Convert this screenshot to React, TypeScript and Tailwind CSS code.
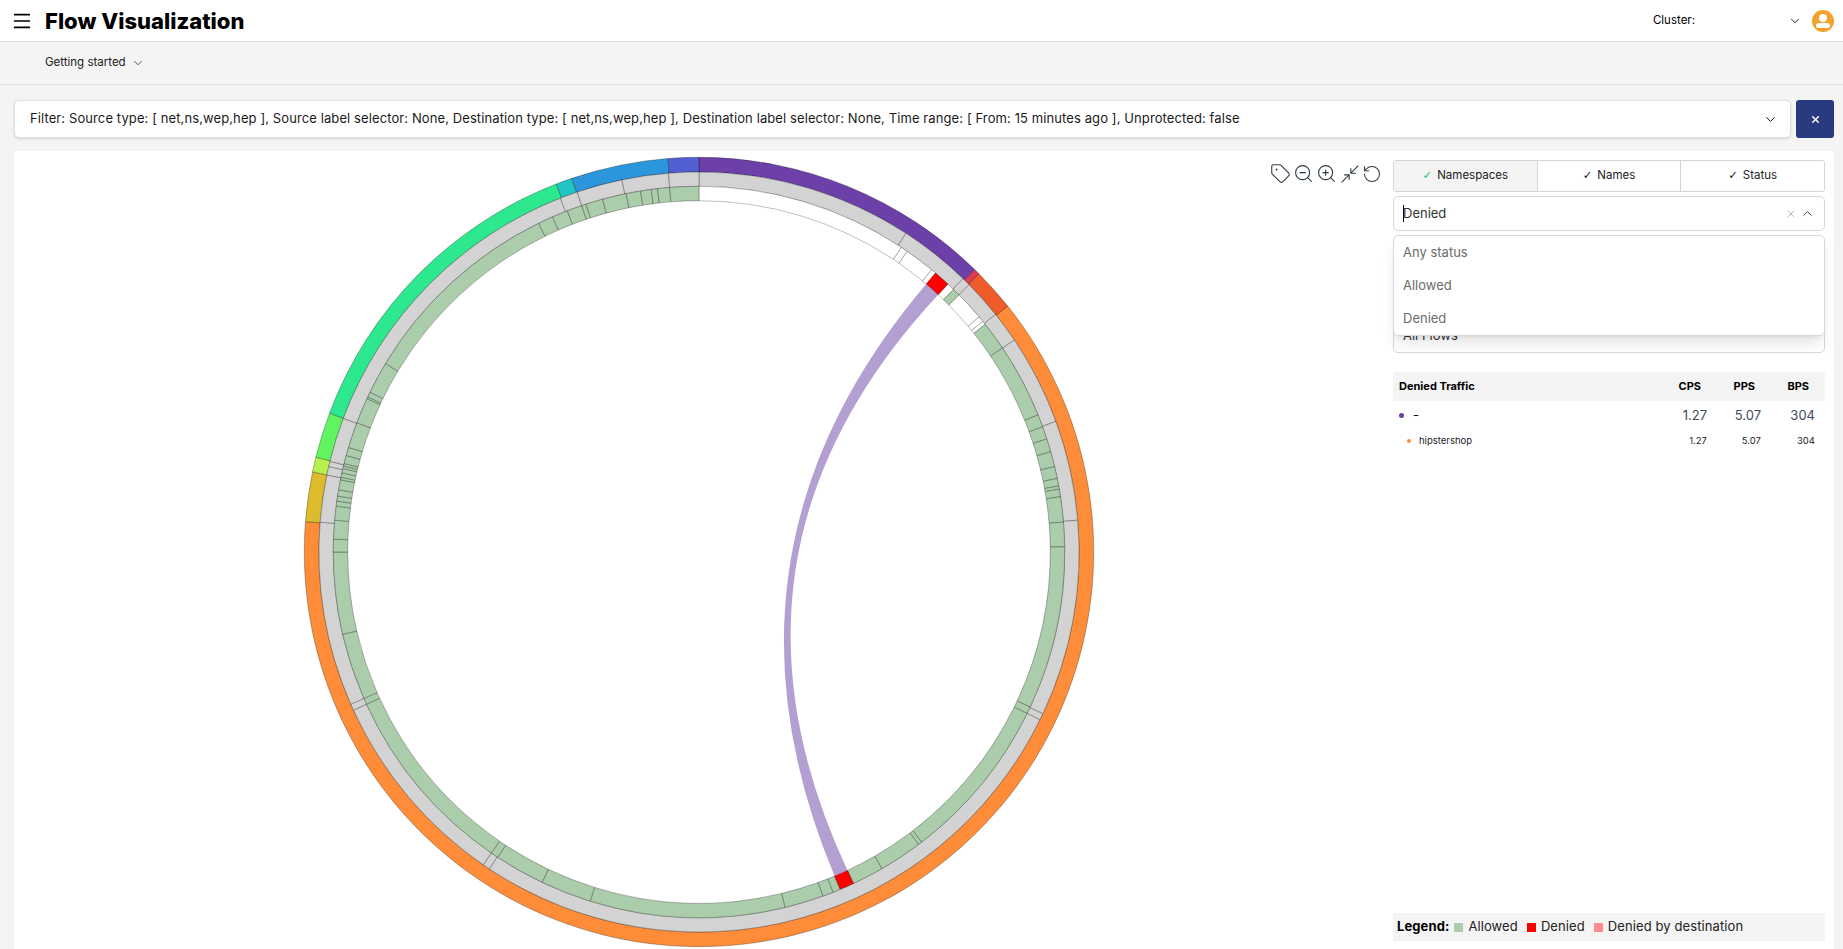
import { ChevronDown, ChevronUp, Menu, RotateCcw, Tag, X, ZoomIn, ZoomOut } from 'lucide-react';

const C = 400; // centre of the chord svg
const R = [351.3, 365.7, 380, 394.7];

const pt = (r: number, a: number) => {
  const t = (a * Math.PI) / 180;
  return `${(C + r * Math.sin(t)).toFixed(2)} ${(C - r * Math.cos(t)).toFixed(2)}`;
};

const arc = (r0: number, r1: number, a0: number, a1: number) => {
  const big = a1 - a0 > 180 ? 1 : 0;
  return `M${pt(r1, a0)}A${r1} ${r1} 0 ${big} 1 ${pt(r1, a1)}L${pt(r0, a1)}A${r0} ${r0} 0 ${big} 0 ${pt(r0, a0)}Z`;
};

const ribbon = (a0: number, a1: number, b0: number, b1: number) => {
  const r = R[0];
  return `M${pt(r, a0)}A${r} ${r} 0 0 1 ${pt(r, a1)}Q${C} ${C} ${pt(r, b0)}A${r} ${r} 0 0 1 ${pt(r, b1)}Q${C} ${C} ${pt(r, a0)}Z`;
};

const outer: [number, number, string][] = [
  [0, 44.3, '#6d3fa9'],
  [44.3, 45.2, '#dc3a50'],
  [45.2, 51.5, '#ee5c2a'],
  [51.5, 274.4, '#ff8c38'],
  [274.4, 281.7, '#dcbc2c'],
  [281.7, 283.9, '#b8f050'],
  [283.9, 290.6, '#60f560'],
  [290.6, 338.8, '#2ee890'],
  [338.8, 341.2, '#20c4c4'],
  [341.2, 355.5, '#2b96dc'],
  [355.5, 360, '#5060d0'],
];

const middleStops = [0, 33, 44, 45.3, 51.3, 56.1, 69.9, 85.2, 115.2, 116.2, 213.5, 214.6, 245.4, 246.4, 274.5, 281.7, 283, 283.8, 290.6, 338.6, 341.3, 348.3, 355.4, 360];

const whites: [number, number][] = [
  [0, 33.6], [33.6, 34.7], [34.7, 39.5], [39.5, 40.3], [42.9, 44.1], [45.3, 50], [50, 50.9], [50.9, 51.5],
];

const reds: [number, number][] = [[40.3, 42.9], [155, 157.3]];

const greenStops = [
  44.1, 45.3, 0,
  51.5, 56.1, 68, 70, 72, 74.1, 76.5, 78.4, 79.6, 80.1, 81.3, 85.3, 89.2, 115.1, 116.2, 142.5, 143.1, 150, 155, 0,
  157.3, 158.5, 160.2, 166.4, 197.3, 205.4, 213.4, 214.6, 245.4, 246.4, 257, 270, 272, 275, 277.2, 278, 278.8, 279.8, 281.4, 281.8, 282.5, 283.2, 283.6, 284, 285.3, 286.6, 290.7, 294.8, 295.1, 295.9, 301, 334, 336.4, 338.9, 341.3, 342, 344.7, 348.5, 350.8, 352.5, 353.5, 355.4, 360,
];

const greens: [number, number][] = [];
greenStops.forEach((s, i) => {
  const next = greenStops[i + 1];
  if (s && next) greens.push([s, next]);
});

const middle: [number, number][] = middleStops.slice(0, -1).map((s, i) => [s, middleStops[i + 1]]);

function ChordChart() {
  return (
    <svg width="800" height="800" viewBox="0 0 800 800" className="block ml-[285px] mt-px">
      <path d={ribbon(40.3, 42.9, 155, 157.3)} fill="#b49fd3" />
      <g stroke="#000" strokeOpacity="0.28" strokeWidth="1">
        {outer.map(([a, b, color]) => <path key={a} d={arc(R[2], R[3], a, b)} fill={color} />)}
        {middle.map(([a, b]) => <path key={a} d={arc(R[1], R[2], a, b)} fill="#d3d3d3" />)}
        {whites.map(([a, b]) => <path key={a} d={arc(R[0], R[1], a, b)} fill="#fff" strokeOpacity="0.25" />)}
        {greens.map(([a, b]) => <path key={a} d={arc(R[0], R[1], a, b)} fill="#abcdab" />)}
        {reds.map(([a, b]) => <path key={a} d={arc(R[0], R[1], a, b)} fill="#ff0000" />)}
      </g>
    </svg>
  );
}

function Tab({ label, active, green }: { label: string; active?: boolean; green?: boolean }) {
  return (
    <div className={`flex-1 flex items-center justify-center gap-[5px] text-[11.5px] text-[#222] border-r border-[#d4d4d8] last:border-r-0 ${active ? 'bg-[#f4f4f4]' : 'bg-white'}`}>
      <span className={`font-['DejaVu_Sans',sans-serif] ${green ? 'text-[#10c878]' : 'text-[#222]'}`}>✓</span>
      {label}
    </div>
  );
}

export default function App() {
  return (
    <div className="h-[949px] overflow-hidden flex flex-col bg-[#f4f4f4] text-black font-['Inter',sans-serif]">
      {/* Header */}
      <header className="h-[42px] shrink-0 bg-white border-b border-[#d9d9dc] flex items-center pl-[11px] pr-[9px]">
        <Menu size={22} strokeWidth={1.9} />
        <h1 className="ml-[12px] text-[22px] font-extrabold tracking-[0px] leading-none">Flow Visualization</h1>
        <div className="ml-auto flex items-center">
          <span className="text-[11.5px] -ml-[2px]">Cluster:</span>
          <ChevronDown size={14} strokeWidth={1.5} className="ml-[93px]" />
          <div className="ml-[10px] w-[22px] h-[22px] rounded-full bg-[#f2a12a] relative overflow-hidden">
            <div className="absolute left-[7px] top-[4px] w-[8px] h-[8px] rounded-full bg-white" />
            <div className="absolute left-[4px] top-[13px] w-[14px] h-[5px] rounded-[4px] bg-white" />
          </div>
        </div>
      </header>

      {/* Sub nav */}
      <nav className="h-[43px] shrink-0 border-b border-[#dcdce0] flex items-center pl-[45px] text-[11.5px] text-[#222]">
        Getting started
        <ChevronDown size={14} strokeWidth={1.3} className="ml-[5px]" />
      </nav>

      {/* Filter */}
      <div className="mt-[15px] mx-[9px] ml-[14px] flex gap-[5px] shrink-0">
        <div className="flex-1 h-[38px] bg-white border border-[#e0e0e3] rounded-[5px] flex items-center pl-[15px] pr-[12px] shadow-sm">
          <span className="text-[13px] tracking-[0.1px] text-[#1a1a1a] whitespace-nowrap">
            Filter: Source type: [ net,ns,wep,hep ], Source label selector: None, Destination type: [ net,ns,wep,hep ], Destination label selector: None, Time range: [ From: 15 minutes ago ], Unprotected: false
          </span>
          <ChevronDown size={15} strokeWidth={1.5} className="ml-auto" />
        </div>
        <button className="w-[38px] h-[38px] rounded-[3px] bg-[#283a80] flex items-center justify-center text-white">
          <X size={11} strokeWidth={3} />
        </button>
      </div>

      {/* Chart panel */}
      <main className="mt-[13px] ml-[14px] mr-[9px] bg-white flex-1 min-h-0 flex">
        <div className="w-[1379px] shrink-0 relative">
          <ChordChart />
          <div className="absolute top-[12px] left-[1256px] flex items-center gap-[2px] text-[#2f3a48]">
            <Tag size={21} strokeWidth={1.25} />
            <ZoomOut size={21} strokeWidth={1.25} />
            <ZoomIn size={21} strokeWidth={1.25} />
            <svg width="20" height="20" viewBox="0 0 24 24" fill="none" stroke="currentColor" strokeWidth="1.3" className="ml-[1px]">
              <path d="M22 2l-9 9M13 5v6h6M2 22l9-9M5 13h6v6" />
            </svg>
            <RotateCcw size={20} strokeWidth={1.25} />
          </div>
        </div>

        <aside className="w-[432px] shrink-0 pt-[9px] flex flex-col relative">
          <div className="h-[32px] flex border border-[#d4d4d8] rounded-[3px] overflow-hidden">
            <Tab label="Namespaces" active green />
            <Tab label="Names" />
            <Tab label="Status" />
          </div>
          <div className="mt-[4px] h-[35px] border border-[#d8d8dc] rounded-[5px] flex items-center pl-[9px] pr-[9px] text-[13px] text-[#333]">
            <span className="w-px h-[17px] bg-black -mr-px" />
            Denied
            <X size={12} strokeWidth={1.5} className="ml-auto text-[#999]" />
            <ChevronUp size={15} strokeWidth={1.5} className="ml-[3px]" />
          </div>

          {/* Open status menu */}
          <div className="absolute top-[84px] left-0 right-0 h-[101px] bg-white border border-[#d8d8dc] rounded-[5px] shadow-lg z-10 text-[13px] leading-[20px] text-[#6b6b6b] pl-[9px] pt-[6px] flex flex-col gap-[13px]">
            <div>Any status</div>
            <div>Allowed</div>
            <div>Denied</div>
          </div>

          <div className="mt-[87px] h-[35px] border border-[#d8d8dc] rounded-[5px] flex items-center pl-[9px] text-[13px] text-[#333]">
            All Flows
          </div>

          {/* Denied traffic table */}
          <div className="mt-[19px] h-[29px] bg-[#f4f4f4] grid grid-cols-[1fr_54px_54px_54px] items-center pl-[6px] pr-[10px] text-[11px] font-bold">
            <span>Denied Traffic</span>
            <span className="text-right pr-[6px]">CPS</span>
            <span className="text-right pr-[6px]">PPS</span>
            <span className="text-right pr-[6px]">BPS</span>
          </div>
          <div className="mt-[1px] h-[27px] grid grid-cols-[1fr_54px_54px_54px] items-center pl-[6px] pr-[10px] text-[13px] text-[#3f4a5a]">
            <span className="flex items-center text-black">
              <span className="w-[5px] h-[5px] rounded-full bg-[#6d3fa9]" />
              <span className="ml-[9px]">-</span>
            </span>
            <span className="text-right">1.27</span>
            <span className="text-right">5.07</span>
            <span className="text-right">304</span>
          </div>
          <div className="h-[24px] grid grid-cols-[1fr_54px_54px_54px] items-center pl-[14px] pr-[10px] text-[9.5px] text-[#222]">
            <span className="flex items-center">
              <span className="w-[4px] h-[4px] rounded-full bg-[#ff8c38]" />
              <span className="ml-[8px]">hipstershop</span>
            </span>
            <span className="text-right">1.27</span>
            <span className="text-right">5.07</span>
            <span className="text-right">304</span>
          </div>

          {/* Legend */}
          <div className="absolute top-[762px] left-0 right-0 h-[28px] bg-[#f4f4f4] flex items-center pl-[4px] text-[13px] tracking-[0.1px] text-[#222]">
            <b className="font-bold text-black">Legend:</b>
            <span className="ml-[5px] w-[9px] h-[9px] bg-[#abcdab]" />
            <span className="ml-[5px]">Allowed</span>
            <span className="ml-[9px] w-[9px] h-[9px] bg-[#ff0000]" />
            <span className="ml-[5px]">Denied</span>
            <span className="ml-[9px] w-[9px] h-[9px] bg-[#ff8c8c]" />
            <span className="ml-[5px]">Denied by destination</span>
          </div>
        </aside>
      </main>
    </div>
  );
}
